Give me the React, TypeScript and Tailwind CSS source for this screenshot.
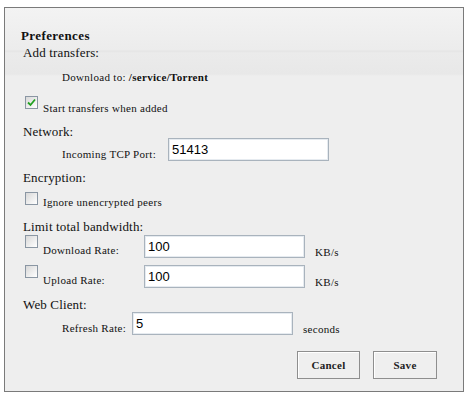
import React from 'react'

function Box({ checked = false }: { checked?: boolean }) {
  return (
    <span className="inline-flex w-[13px] h-[13px] shrink-0 items-center justify-center border border-[#8a96a3] bg-[linear-gradient(135deg,#d8d8d8,#ffffff)]">
      {checked && (
        <svg width="9" height="9" viewBox="0 0 9 9">
          <path d="M1 4.5 L3.5 7 L8 1.5" fill="none" stroke="#21a121" strokeWidth="1.8" />
        </svg>
      )}
    </span>
  )
}

function Field({ value, width }: { value: string; width: string }) {
  return (
    <input
      readOnly
      value={value}
      className={`${width} h-[23px] shrink-0 border border-[#a9b3bd] bg-white pl-[3px] text-[13px] text-black outline-none font-['Liberation_Sans',Arial,sans-serif] shadow-[inset_0_0_0_1px_#e6ebf0]`}
    />
  )
}

export default function App() {
  const label = "text-[13px] leading-none text-[#111] tracking-[0.15px]"
  const small = "text-[11px] leading-none text-[#111] tracking-[0.3px]"
  return (
    <div className="w-[465px] h-[393px] bg-white pt-[7px] pl-[4px] font-['Liberation_Serif','Times_New_Roman',serif]">
      <div className="w-[460px] h-[385px] border border-[#7a7a7a] bg-[linear-gradient(to_bottom,#f3f3f3_0px,#ececec_42px,#e4e4e4_43px,#ebebeb_45px,#e8e8e8_66px,#eeeeee_68px,#eeeeee_100%)]">
        <div className="pl-[16px]">
          <div className="pt-[21px] text-[13px] font-bold leading-none text-[#111] tracking-[0.4px]">Preferences</div>
          <div className={`mt-[4px] ml-[2px] ${label}`}>Add transfers:</div>
          <div className={`mt-[13px] ml-[41px] ${small}`}>
            Download to: <span className="font-bold">/service/Torrent</span>
          </div>

          <div className="mt-[13px] ml-[4px] flex items-start">
            <Box checked />
            <span className={`ml-[5px] mt-[7px] ${small}`}>Start transfers when added</span>
          </div>

          <div className={`mt-[11px] ml-[2px] ${label}`}>Network:</div>
          <div className="mt-0 flex items-start">
            <span className={`ml-[41px] mt-[11px] w-[106px] ${small}`}>Incoming TCP Port:</span>
            <Field value="51413" width="w-[161px]" />
          </div>

          <div className={`mt-[10px] ml-[2px] ${label}`}>Encryption:</div>
          <div className="mt-[8px] ml-[4px] flex items-start">
            <Box />
            <span className={`ml-[5px] mt-[5px] ${small}`}>Ignore unencrypted peers</span>
          </div>

          <div className={`mt-[12px] ml-[2px] ${label}`}>Limit total bandwidth:</div>

          <div className="mt-[2px] ml-[4px] flex items-start">
            <Box />
            <span className={`ml-[5px] mt-[10px] w-[101px] ${small}`}>Download Rate:</span>
            <Field value="100" width="w-[161px]" />
            <span className={`ml-[10px] mt-[12px] ${small}`}>KB/s</span>
          </div>

          <div className="mt-[7px] ml-[4px] flex items-start">
            <Box />
            <span className={`ml-[5px] mt-[10px] w-[101px] ${small}`}>Upload Rate:</span>
            <Field value="100" width="w-[161px]" />
            <span className={`ml-[10px] mt-[12px] ${small}`}>KB/s</span>
          </div>

          <div className={`mt-[10px] ml-[2px] ${label}`}>Web Client:</div>
          <div className="mt-[1px] flex items-start">
            <span className={`ml-[41px] mt-[11px] w-[70px] ${small}`}>Refresh Rate:</span>
            <Field value="5" width="w-[161px]" />
            <span className={`ml-[10px] mt-[12px] ${small}`}>seconds</span>
          </div>

          <div className="mt-[16px] flex justify-end gap-[13px] pr-[26px]">
            <button className="w-[63px] h-[28px] border border-[#8e8e8e] bg-[#efefef] text-[11px] font-bold text-[#222] tracking-[0.3px] shadow-[inset_1px_1px_0_#ffffff]">
              Cancel
            </button>
            <button className="w-[64px] h-[28px] border border-[#8e8e8e] bg-[#efefef] text-[11px] font-bold text-[#222] tracking-[0.3px] shadow-[inset_1px_1px_0_#ffffff]">
              Save
            </button>
          </div>
        </div>
      </div>
    </div>
  )
}
